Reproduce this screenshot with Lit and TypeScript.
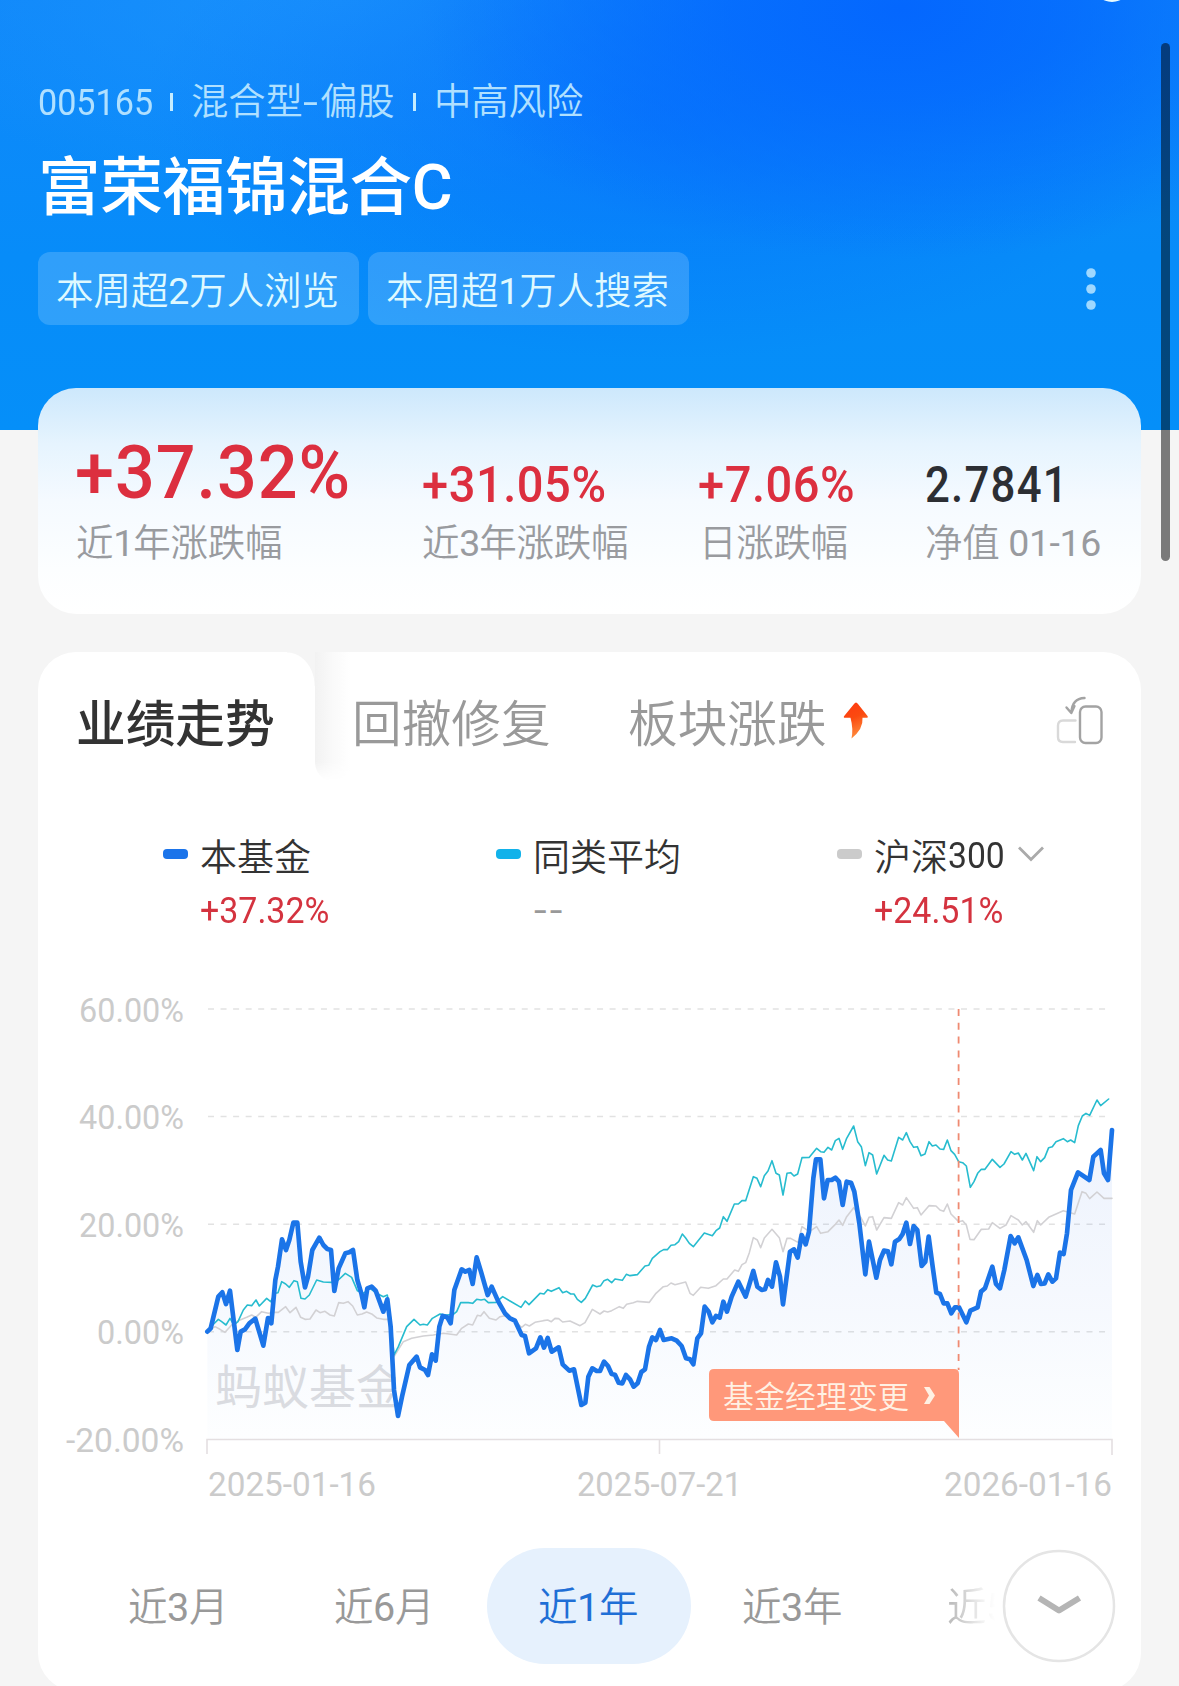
import { LitElement, html, svg, css } from "lit";
import { customElement, property } from "lit/decorators.js";
import { classMap } from "lit/directives/class-map.js";

type Tone = "up" | "flat" | "none";

interface Stat { value: string; label: string; tone: Tone; size: string; }
interface LegendItem { name: string; value: string; tone: Tone; color: string; menu?: boolean; }

const STATS: Stat[] = [
  { value: "+37.32%", label: "近1年涨跌幅", tone: "up", size: "s1" },
  { value: "+31.05%", label: "近3年涨跌幅", tone: "up", size: "s2" },
  { value: "+7.06%", label: "日涨跌幅", tone: "up", size: "s3" },
  { value: "2.7841", label: "净值 01-16", tone: "flat", size: "s4" },
];

const LEGEND: LegendItem[] = [
  { name: "本基金", value: "+37.32%", tone: "up", color: "blue" },
  { name: "同类平均", value: "--", tone: "none", color: "cyan" },
  { name: "沪深300", value: "+24.51%", tone: "up", color: "grey", menu: true },
];

/* Latin digits sit beside light Chinese glyphs, so they carry their own weight. */
const mixed = (text: string) =>
  text.split(/([\d-]+)/).map((part) => (/^[\d-]+$/.test(part) ? html`<b class="n">${part}</b>` : part));

/* Series points are stored on a grid of one third of a pixel. */
const FUND = `52,755 62,745 85,650 97,637 108,672 120,632 142,810 152,755 165,748 178,730 196,716 220,797 234,714 244,730
256,600 264,560 276,478 288,510 298,480 310,428 322,428 332,545 345,622 354,590 367,510 388,473 400,495 412,507 423,510
433,633 446,565 466,520 478,517 489,510 502,600 514,640 523,682 532,625 545,620 557,632 580,695 592,658 602,740 612,930
624,1008 636,950 658,855 680,830 690,862 705,870 714,885 726,823 737,842 748,740 758,708 772,712 782,730 793,630 815,568
826,575 838,570 848,612 860,532 873,575 893,645 905,620 925,665 945,700 960,715 975,722 995,765 1005,768 1017,820
1038,805 1051,772 1062,803 1073,774 1085,815 1106,802 1118,853 1138,872 1152,868 1174,975 1186,968 1195,890 1207,865
1220,873 1230,873 1242,845 1254,858 1265,882 1275,884 1286,908 1297,910 1308,885 1320,898 1331,920 1343,910 1354,876
1365,868 1377,800 1387,772 1398,780 1410,750 1421,780 1445,775 1460,782 1475,798 1488,835 1500,838 1510,853 1522,775
1533,760 1544,680 1556,695 1567,727 1578,708 1589,713 1600,665 1611,695 1625,650 1645,605 1667,650 1690,573 1702,620
1715,630 1725,628 1734,600 1746,620 1758,547 1770,590 1779,673 1800,515 1812,508 1823,533 1835,465 1847,493 1857,455
1870,295 1878,238 1891,238 1902,355 1913,300 1925,300 1936,293 1947,305 1958,375 1970,305 1983,308 1993,335 2008,430
2026,583 2037,485 2059,593 2070,540 2082,512 2094,514 2104,553 2115,485 2128,477 2138,462 2149,428 2160,492 2171,438
2182,450 2195,558 2206,545 2216,470 2228,560 2239,638 2250,642 2261,670 2272,670 2284,700 2295,682 2307,682 2329,727
2341,692 2363,682 2373,635 2385,625 2407,560 2418,612 2430,625 2443,570 2462,468 2474,490 2485,472 2510,540 2530,618
2542,585 2553,612 2564,610 2575,583 2587,605 2598,595 2610,518 2621,522 2631,460 2643,330 2664,277 2698,300 2710,230
2732,210 2742,280 2754,300 2766,150`;

const PEERS = `52,755 68,735 85,718 95,725 108,735 120,715 132,735 144,725 160,690 172,675 185,677 198,660 208,678 230,655
242,665 255,640 264,638 275,605 287,612 298,622 312,602 322,605 333,655 345,657 358,645 380,600 400,606 425,607 445,600
466,580 485,592 502,632 520,640 540,625 560,640 580,650 592,645 600,700 612,825 625,800 650,740 672,718 690,735 700,733
712,735 727,715 750,702 770,705 790,703 800,695 812,668 835,668 848,670 860,658 873,660 884,658 895,668 918,667 938,650
960,663 993,682 1006,663 1017,674 1050,640 1062,642 1073,629 1084,634 1107,623 1118,638 1130,634 1142,642 1152,642
1162,658 1174,667 1186,655 1208,615 1220,620 1232,617 1242,602 1253,598 1265,608 1275,597 1297,601 1309,583 1320,587
1342,584 1365,558 1376,556 1387,535 1410,515 1421,509 1432,509 1443,496 1455,494 1466,485 1477,462 1487,474 1498,490
1510,500 1543,459 1567,467 1578,452 1589,444 1600,410 1611,424 1633,372 1645,372 1656,362 1667,362 1690,290 1701,295
1712,320 1723,287 1734,273 1746,242 1758,280 1768,285 1779,345 1791,280 1802,278 1812,288 1823,282 1836,233 1858,232
1880,205 1892,215 1902,217 1914,202 1925,210 1936,182 1947,175 1958,208 1970,175 1991,138 2003,185 2014,200 2026,257
2037,218 2048,225 2060,282 2082,226 2093,240 2104,243 2126,172 2138,180 2149,158 2160,185 2171,202 2182,200 2193,227
2205,222 2217,185 2227,198 2238,195 2250,207 2261,208 2272,180 2283,212 2294,223 2306,245 2318,248 2329,258 2341,322
2352,305 2363,280 2374,268 2385,268 2407,238 2430,262 2442,252 2463,215 2474,223 2485,219 2497,240 2508,220 2531,272
2541,230 2552,245 2564,233 2576,203 2587,200 2598,185 2620,176 2632,185 2642,180 2654,188 2665,137 2677,108 2688,100
2699,106 2721,60 2732,77 2756,57`;

const INDEX = `52,755 75,740 90,748 105,757 125,735 145,722 170,712 185,705 197,712 215,695 235,700 252,697 265,697
287,680 300,698 318,682 332,712 345,718 360,717 378,690 390,698 405,694 420,705 433,708 446,668 460,670 474,665 488,678
502,705 516,702 530,696 545,702 560,714 580,718 595,718 602,770 612,830 640,785 665,775 700,768 730,765 760,760 800,765
815,745 835,732 848,735 862,706 872,708 882,695 898,715 918,720 930,710 945,707 970,720 995,742 1006,733 1018,738
1035,727 1060,722 1073,720 1084,725 1095,715 1106,716 1118,726 1140,723 1170,737 1185,728 1207,688 1230,702 1242,693
1253,696 1265,692 1288,680 1300,685 1310,673 1330,668 1342,664 1378,667 1398,640 1420,620 1432,618 1443,609 1455,614
1487,606 1500,640 1510,646 1532,622 1555,625 1578,617 1600,597 1611,597 1634,570 1645,574 1656,554 1667,548 1678,518
1690,473 1702,480 1712,503 1723,474 1746,448 1768,473 1779,515 1791,475 1802,475 1824,487 1836,440 1858,455 1880,440
1892,460 1914,455 1936,433 1947,420 1958,436 1970,410 1991,383 2014,415 2026,438 2037,412 2048,410 2060,450 2082,413
2104,415 2126,368 2138,375 2149,353 2171,385 2182,383 2193,405 2217,377 2238,378 2250,390 2261,394 2272,372 2283,402
2306,425 2318,422 2329,435 2340,478 2352,479 2374,448 2396,447 2407,428 2430,445 2448,435 2463,407 2485,420 2497,435
2508,425 2531,457 2542,422 2552,435 2576,412 2620,392 2654,402 2676,335 2688,340 2699,356 2721,336 2742,355 2766,355`;

@customElement("trend-chart")
export class TrendChart extends LitElement {
  static styles = css`
    :host { display: block; }
    svg { display: block; width: 1103px; height: 560px; font-family: Roboto, "Noto Sans CJK SC", sans-serif; }
    .axis { fill: #cbcbcb; font-size: 33.5px; font-weight: 400; }
    .grid { stroke: #e2e2e2; stroke-width: 1.6; stroke-dasharray: 6 6.55; }
    .base { stroke: #e4dfe1; stroke-width: 1.6; fill: none; }
    .event { stroke: #ef8a72; stroke-width: 1.8; stroke-dasharray: 7 6.8; }
    .mark { fill: #dddde0; font-size: 47px; font-weight: 400; }
    .tag { fill: #ff987a; }
    .tag-text { fill: #fff1e4; font-size: 31px; font-weight: 350; }
    .line { fill: none; stroke-linejoin: round; stroke-linecap: round; }
    .fund { stroke: #1b74e8; stroke-width: 14; }
    .peers { stroke: #27bccf; stroke-width: 4.8; }
    .index { stroke: #d2d1d4; stroke-width: 4.8; }
  `;

  private ticks: [string, number, number][] = [
    ["60.00%", 1009, 105], ["40.00%", 1116.5, 105], ["20.00%", 1224.2, 105],
    ["0.00%", 1331.8, 87], ["-20.00%", 1439.3, 118],
  ];
  private dates: [string, number, number][] = [
    ["2025-01-16", 208, 168], ["2025-07-21", 577, 165], ["2026-01-16", 944, 168],
  ];

  render() {
    return html`<svg viewBox="38 970 1103 560">
      <defs>
        <linearGradient id="fill" gradientUnits="userSpaceOnUse" x1="0" y1="150" x2="0" y2="1077">
          <stop offset="0" stop-color="#2c6ee8" stop-opacity="0.085" />
          <stop offset="0.6" stop-color="#2c6ee8" stop-opacity="0.042" />
          <stop offset="1" stop-color="#2c8ef0" stop-opacity="0.008" />
        </linearGradient>
        <clipPath id="mark-area"><rect x="207" y="1340" width="189" height="90" /></clipPath>
      </defs>
      ${this.ticks.map(([t, y, w], i) => svg`
        <text class="axis" x=${184 - w} y=${y + 12.5} textLength=${w} lengthAdjust="spacingAndGlyphs">${t}</text>
        ${i < 4 ? svg`<line class="grid" x1="208" x2="1111" y1=${y} y2=${y} />` : ""}`)}
      <path class="base" d="M207 1454V1439.5H1112V1455M659.5 1439.5V1454" />
      ${this.dates.map(([t, x, w]) => svg`
        <text class="axis" x=${x} y="1496" textLength=${w} lengthAdjust="spacingAndGlyphs">${t}</text>`)}
      <text class="mark" x="215" y="1404" clip-path="url(#mark-area)">蚂蚁基金</text>
      <g transform="translate(190 1080) scale(0.33333)">
        <path fill="url(#fill)" d=${`M52,1077 L${FUND} L2766,1077Z`} />
        <polyline class="line index" points=${INDEX} />
        <polyline class="line peers" points=${PEERS} />
        <polyline class="line fund" points=${FUND} />
      </g>
      <line class="event" x1="958.6" x2="958.6" y1="1009" y2="1370" />
      <path class="tag" d="M714 1369H954Q959 1369 959 1374V1438L944 1421H714Q709 1421 709 1416V1374Q709 1369 714 1369Z" />
      <text class="tag-text" x="723" y="1408" textLength="186">基金经理变更</text>
      <path d="M924 1387H929.5L935 1395.500L929.5 1404H924L929 1395.500Z" fill="#fff1e4" />
    </svg>`;
  }
}

@customElement("fund-stat")
export class FundStat extends LitElement {
  @property({ attribute: false }) stat!: Stat;
  static styles = css`
    :host { display: block; white-space: nowrap; }
    .value { display: flex; align-items: flex-end; height: 72px; font-weight: 500; }
    .value span { transform-origin: 0 100%; line-height: 1; }
    .up { color: #dc2f3f; }
    .flat { color: #2c2e33; }
    .s1 span { font-size: 74px; letter-spacing: 1px; transform: translate(-1px, 2px) scaleX(0.948); }
    .s2 span { font-size: 50px; letter-spacing: 0.6px; transform: translate(0, 2px) scaleX(0.94); }
    .s3 span { font-size: 50px; letter-spacing: 0.6px; transform: translate(-1px, 2px) scaleX(0.94); }
    .s4 span { font-size: 50px; letter-spacing: 1.4px; transform: translate(-1px, 2px) scaleX(0.875); }
    .label { margin-top: 12px; line-height: 46px; font-size: 37.5px; font-weight: 350; color: #999b9f; letter-spacing: -0.3px; }
    .s4 + .label { margin-left: -1px; }
    .n { font-weight: 400; letter-spacing: -1px; }
    .s4 + .label .n { letter-spacing: -0.4px; }
  `;
  render() {
    const { value, label, tone, size } = this.stat;
    return html`<div class=${classMap({ value: true, [tone]: true, [size]: true })}><span>${value}</span></div>
      <div class="label">${mixed(label)}</div>`;
  }
}

@customElement("app-root")
export class AppRoot extends LitElement {
  static styles = css`
    * { box-sizing: border-box; }
    :host {
      display: block; position: relative; width: 1179px; height: 1686px; overflow: hidden;
      background: #f5f5f5; font-family: Roboto, "Noto Sans CJK SC", sans-serif; white-space: nowrap;
    }
    .n { font-weight: 400; }
    .hero {
      height: 430px; padding: 78px 38px 0; color: #fff;
      background:
        radial-gradient(ellipse 480px 250px at 900px 10px, rgba(4, 103, 254, 1) 0%, rgba(4, 105, 254, 0.8) 35%, rgba(4, 120, 252, 0) 100%),
        radial-gradient(ellipse 520px 250px at 660px 110px, rgba(6, 110, 252, 0.6) 0%, rgba(6, 122, 252, 0) 100%),
        radial-gradient(ellipse 460px 200px at 340px 0px, rgba(26, 146, 252, 0.9), rgba(20, 144, 252, 0) 100%),
        linear-gradient(180deg, #1088fa 0%, #078cf9 60%, #058ff9 100%);
    }
    .meta { display: flex; align-items: center; height: 48px; font-size: 37.3px; font-weight: 350; color: #b0e0ff; }
    .meta div { line-height: 48px; }
    .meta .code { width: 132px; font-size: 37.500px; font-weight: 400; }
    .code span, .digits { display: inline-block; transform: scaleX(0.91); transform-origin: 0 50%; }
    .code span { padding-bottom: 2px; line-height: 46px; }
    .digits { font-weight: 400; }
    .kind { width: 222px; margin-left: 18px; }
    .kind .n { display: inline-block; width: 17px; transform: scaleX(1.45); transform-origin: 0 50%; }
    .risk { margin-left: 18px; }
    .bar { width: 3px; height: 18px; margin-top: -1px; background: #c4ecff; }
    h1 { margin: 23px 0 0; height: 78px; line-height: 78px; font-size: 62.6px; font-weight: 500; letter-spacing: -0.3px; }
    .chips-row { display: flex; align-items: center; justify-content: space-between; margin-top: 25px; }
    .chips { display: flex; gap: 9px; }
    .chip {
      width: 321px; height: 73px; border-radius: 12px; line-height: 78px; text-align: center; padding-right: 2px;
      font-size: 37.5px; letter-spacing: -0.1px; font-weight: 350; color: #dff9ff; background: rgba(255, 255, 255, 0.17);
    }
    .more { display: block; width: 10px; height: 42px; margin-right: 45px; }
    .bubble { position: absolute; left: 1093px; top: -36px; width: 38px; height: 38px; border-radius: 50%; background: #e8fbff; }
    .summary {
      position: relative; display: grid; grid-template-columns: 346px 277px 227px auto; height: 226px; margin: -42px 38px 0; padding: 48px 0 0 38px;
      border-radius: 38px; background: linear-gradient(180deg, #cde8fc 0%, #e6f4fe 25%, #f5faff 50%, #fcfeff 80%, #fff 100%);
    }
    .panel { height: 1039px; margin: 38px 38px 0; border-radius: 38px; background: #fff; }
    .tabs { display: flex; align-items: center; height: 130px; font-size: 49.7px; color: #999; }
    .tab { height: 130px; line-height: 147px; font-weight: 350; }
    .active {
      position: relative; width: 278px; padding-left: 38px; color: #333; font-weight: 500;
    }
    .active span { position: relative; }
    .active::before {
      content: ""; position: absolute; left: 277px; top: 0; width: 36px; height: 129px;
      background: linear-gradient(90deg, #f2f2f2, #fafafa 50%, #fff);
      -webkit-mask-image: linear-gradient(180deg, #000 85%, transparent);
      mask-image: linear-gradient(180deg, #000 85%, transparent);
      border-radius: 0 0 0 18px;
    }
    .active::after {
      content: ""; position: absolute; left: 249px; top: 0; width: 28px; height: 34px;
      background: radial-gradient(ellipse 28px 34px at 0 100%, transparent 97%, #f5f5f5 100%);
    }
    .t2 { margin-left: 36px; width: 276px; }
    .t3 { width: 215px; }
    .hot { width: 26px; height: 37px; display: block; margin-top: 6px; }
    .flip { width: 48px; height: 50px; display: block; margin: 7px 0 0 187px; }
    .legend { display: grid; grid-template-columns: 333px 341px auto; margin-top: 46px; padding-left: 125px; }
    .item { display: grid; grid-template-columns: 37px auto; justify-content: start; }
    .name { display: flex; align-items: center; height: 54px; font-size: 37px; font-weight: 350; color: #333; }
    .name .digits { margin-left: 0; width: 56px; }
    .swatch { align-self: center; width: 25px; height: 10px; margin-top: -3px; border-radius: 4px; }
    .blue { background: #1b74ea; } .cyan { background: #12b2ea; } .grey { background: #cbcbcb; }
    .chev { width: 26px; height: 16px; margin: -2px 0 0 14px; }
    .pct { grid-column: 2; height: 54px; line-height: 57px; font-size: 36.5px; }
    .pct span { display: inline-block; transform: scaleX(0.93); transform-origin: 0 50%; }
    .up { color: #d4333f; }
    .none { color: #999; letter-spacing: 2.6px; }
    .none span { transform: translateX(1px) scaleX(1.25); }
    .chart { margin-top: 34px; }
    .ranges { position: relative; display: flex; align-items: center; height: 116px; margin-top: 18px; font-size: 39.5px; font-weight: 350; color: #999; }
    .range { width: 204px; height: 116px; line-height: 120px; text-align: center; letter-spacing: -0.4px; padding-right: 2px; border-radius: 58px; }
    .range:first-child { margin-left: 37px; }
    .range.m { width: 206px; padding-right: 0; }
    .range.on { color: #1f6fd6; background: #e6f1fd; }
    .range.cut {
      width: 110px; margin-left: 52px; text-align: left; border-radius: 0; color: #aaa;
      -webkit-mask-image: linear-gradient(90deg, rgba(0, 0, 0, 0.75) 5%, rgba(0, 0, 0, 0.12) 34%, transparent 44%);
      mask-image: linear-gradient(90deg, rgba(0, 0, 0, 0.75) 5%, rgba(0, 0, 0, 0.12) 34%, transparent 44%);
    }
    .expand { display: block; position: absolute; left: 963px; top: 0; width: 116px; height: 116px; }
    .scroll { position: absolute; left: 1161px; top: 43px; width: 9px; height: 518px; border-radius: 5px; background: rgba(0, 0, 0, 0.5); }
  `;

  private legendName(name: string) {
    const m = name.match(/^(\D+)(\d+)$/);
    return m ? html`${m[1]}<span class="digits">${m[2]}</span>` : name;
  }

  render() {
    return html`
      <header class="hero">
        <div class="meta">
          <div class="code"><span>005165</span></div>
          <i class="bar"></i><div class="kind">${mixed("混合型-偏股")}</div>
          <i class="bar"></i><div class="risk">中高风险</div>
        </div>
        <h1>富荣福锦混合C</h1>
        <div class="chips-row">
          <div class="chips">
            <div class="chip">${mixed("本周超2万人浏览")}</div>
            <div class="chip">${mixed("本周超1万人搜索")}</div>
          </div>
          <svg class="more" viewBox="0 0 10 42" fill="#9fd8ff">
            <circle cx="5" cy="5" r="4.8" /><circle cx="5" cy="21" r="4.8" /><circle cx="5" cy="37" r="4.8" />
          </svg>
        </div>
      </header>
      <div class="bubble"></div>
      <section class="summary">${STATS.map((s) => html`<fund-stat .stat=${s}></fund-stat>`)}</section>
      <section class="panel">
        <nav class="tabs">
          <div class="tab active"><span>业绩走势</span></div>
          <div class="tab t2">回撤修复</div>
          <div class="tab t3">板块涨跌</div>
          <svg class="hot" viewBox="0 0 26 37">
            <defs><linearGradient id="hot" x1="0" y1="0" x2="0.3" y2="1">
              <stop offset="0" stop-color="#ff3a10" /><stop offset="0.5" stop-color="#fb4a10" /><stop offset="1" stop-color="#ff8a3c" />
            </linearGradient></defs>
            <path d="M13 0.5Q14 0.5 15 2L24.5 14Q25.500 15.800 23.500 15.800H19.500Q20.500 27 8.500 36.500Q10.500 27 7.500 15.800H2Q0 15.800 1.200 14L11 2Q12 0.500 13 0.500Z" fill="url(#hot)" />
          </svg>
          <svg class="flip" viewBox="0 0 48 50" fill="none" stroke-width="2.4" stroke-linecap="round" stroke-linejoin="round">
            <path d="M19.500 24.500H7Q2 24.500 2 29.500V41Q2 46 7 46H19" stroke="#d9d9d9" />
            <rect x="24" y="10.500" width="21.500" height="36.500" rx="5.500" stroke="#a3a3a3" />
            <path d="M28.500 2Q16 2.500 15.500 16.500M10.500 11.500L15.300 17L18.500 10" stroke="#a3a3a3" />
          </svg>
        </nav>
        <div class="legend">
          ${LEGEND.map((l) => html`<div class="item">
            <i class=${classMap({ swatch: true, [l.color]: true })}></i>
            <div class="name">${this.legendName(l.name)}${l.menu
              ? html`<svg class="chev" viewBox="0 0 26 16" fill="none" stroke="#aaa" stroke-width="2.800"><path d="M1 1.500L13 13.500L25 1.500" /></svg>`
              : ""}</div>
            <div class=${classMap({ pct: true, [l.tone]: true })}><span>${l.value}</span></div>
          </div>`)}
        </div>
        <trend-chart class="chart"></trend-chart>
        <div class="ranges">
          <div class="range m">${mixed("近3月")}</div><div class="range m">${mixed("近6月")}</div>
          <div class="range on">${mixed("近1年")}</div><div class="range">${mixed("近3年")}</div>
          <div class="range cut">${mixed("近5年")}</div>
          <svg class="expand" viewBox="0 0 116 116" fill="none">
            <circle cx="58" cy="58" r="55" fill="#fff" stroke="#e5e5e5" stroke-width="2.500" />
            <path d="M38 50L58 62.500L78.500 50" stroke="#b5b5b5" stroke-width="6" stroke-linejoin="round" />
          </svg>
        </div>
      </section>
      <div class="scroll"></div>
    `;
  }
}
